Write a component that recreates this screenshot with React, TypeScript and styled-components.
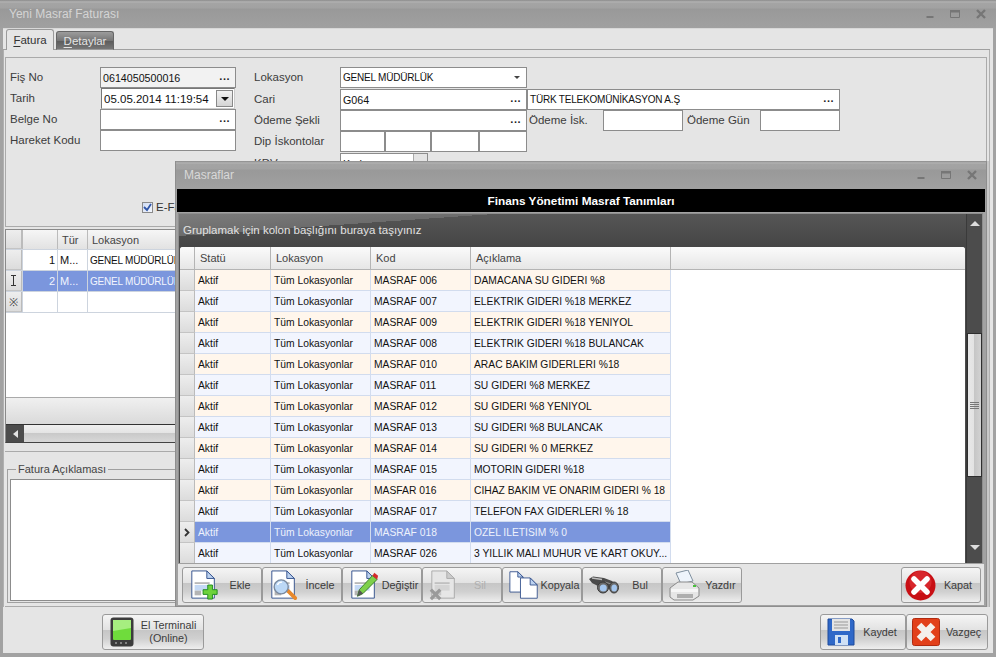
import React from 'react';
import styled, { createGlobalStyle } from 'styled-components';

const GlobalStyle = createGlobalStyle`
  html, body { margin: 0; padding: 0; background: #a0a0a0; }
  body { font-family: "Liberation Sans", Arial, sans-serif; font-size: 11px; color: #333; }
  * { box-sizing: border-box; }
`;

const MainWindow = styled.div`
  position: relative;
  width: 996px;
  height: 657px;
  overflow: hidden;
  display: flex;
  flex-direction: column;
  background: #a2a2a2;
  padding: 0 3px 4px 3px;
`;

const TitleBar = styled.div`
  flex: none;
  height: 28px;
  margin: 0 -3px;
  padding: 0 10px 0 9px;
  display: flex;
  align-items: center;
  justify-content: space-between;
  background: linear-gradient(#8a8a8a 0, #b4b4b4 2px, #a4a4a4 3px, #a2a2a2 8px, #999 9px, #a0a0a0 27px);
  color: #d4d4d4;
  font-size: 12px;
`;

const WinControls = styled.div`
  display: flex;
  align-items: center;
  gap: 16px;
  margin-top: -1px;
  svg { display: block; }
`;

const WindowButtons = () => (
  <WinControls>
    <svg width="8" height="10" viewBox="0 0 8 10"><rect x="0.5" y="7" width="7" height="2" fill="#767676" /></svg>
    <svg width="10" height="10" viewBox="0 0 10 10"><path d="M0.5 1.5h9v7h-9z" fill="none" stroke="#767676" /><rect x="0" y="1" width="10" height="2.5" fill="#767676" /></svg>
    <svg width="10" height="10" viewBox="0 0 10 10"><path d="M1 1l8 8M9 1l-8 8" stroke="#767676" strokeWidth="2.4" /></svg>
  </WinControls>
);

const Body = styled.div`
  flex: 1;
  min-height: 0;
  display: flex;
  flex-direction: column;
  background: #e5e5e5;
  border-top: 1px solid #d8d8d8;
`;

const TabStrip = styled.div`
  flex: none;
  height: 21px;
  display: flex;
  align-items: flex-end;
  gap: 2px;
  padding: 1px 0 0 3px;
  margin-right: 3px;
  border-bottom: 1px solid #a0a0a0;
`;

const Tab = styled.div<{ $active?: boolean }>`
  height: ${p => (p.$active ? 21 : 19)}px;
  width: ${p => (p.$active ? 48 : 58)}px;
  margin-bottom: -1px;
  display: flex;
  align-items: center;
  justify-content: center;
  border: 1px solid ${p => (p.$active ? '#9a9a9a' : '#666')};
  border-bottom: ${p => (p.$active ? 'none' : '1px solid #9a9a9a')};
  border-radius: 3px 3px 0 0;
  background: ${p => (p.$active ? '#e5e5e5' : 'linear-gradient(#9c9c9c, #777 50%, #5a5a5a 51%, #777)')};
  color: ${p => (p.$active ? '#333' : '#e4e4e4')};
  font-size: 11.5px;
  u { text-underline-offset: 2px; }
`;

const TabPage = styled.div`
  flex: 1;
  min-height: 0;
  display: flex;
  flex-direction: column;
  padding: 7px 2px 0 1px;
  margin-right: 3px;
  border-right: 1px solid #b0b0b0;
  border-left: 1px solid #b0b0b0;
`;

const FormPanel = styled.div`
  flex: none;
  height: 170px;
  border: 1px solid #aaa;
  padding: 9px 0 0 3px;
  display: flex;
  flex-direction: column;
`;

const FormColumns = styled.div`
  display: flex;
`;

const Column = styled.div<{ $width: number; $rows: string }>`
  width: ${p => p.$width}px;
  display: grid;
  grid-template-rows: ${p => p.$rows};
`;

const FormRow = styled.div`
  display: flex;
  align-items: stretch;
  height: 21px;
`;

const Label = styled.div<{ $width: number; $pad?: number }>`
  flex: none;
  width: ${p => p.$width}px;
  display: flex;
  align-items: center;
  padding: 0 0 2px ${p => p.$pad ?? 1}px;
  color: #3c3c3c;
  font-size: 11.5px;
  white-space: nowrap;
`;

const Field = styled.div<{ $width: number; $shaded?: boolean }>`
  flex: none;
  width: ${p => p.$width}px;
  height: 21px;
  display: flex;
  align-items: center;
  justify-content: space-between;
  padding: 0 5px 0 2px;
  background: ${p => (p.$shaded ? '#f2f2f2' : '#fff')};
  border: 1px solid #8c8c8c;
  color: #111;
  font-size: 10.7px;
  overflow: hidden;
  white-space: nowrap;
`;

const Caps = styled.span`
  font-size: 10px;
  letter-spacing: -0.2px;
`;

const Dots = styled.span`
  font-weight: 700;
  font-size: 11px;
  letter-spacing: 0.5px;
  line-height: 8px;
  margin-top: -3px;
  color: #222;
`;

const SelectArrow = styled.span`
  width: 0;
  height: 0;
  margin-right: 1px;
  border-left: 3px solid transparent;
  border-right: 3px solid transparent;
  border-top: 3px solid #444;
`;

const DateField = styled(Field)`
  padding-right: 1px;
  border-color: #777 #ccc #ccc #777;
  margin-left: 1px;
  font-size: 11.5px;
`;

const DateDrop = styled.span`
  width: 17px;
  height: 17px;
  display: flex;
  align-items: center;
  justify-content: center;
  background: linear-gradient(#f2f2f2, #d4d4d4);
  border: 1px solid #888;
  span {
    border-left: 4px solid transparent;
    border-right: 4px solid transparent;
    border-top: 4px solid #111;
  }
`;

const KdvField = styled(Field)`
  padding-right: 0;
`;

const KdvDrop = styled.span`
  align-self: stretch;
  width: 14px;
  background: #e4e4e4;
  border-left: 1px solid #aaa;
`;

const CheckRow = styled.div`
  margin-top: auto;
  margin-bottom: 13px;
  padding-left: 133px;
  display: flex;
  align-items: center;
  gap: 3px;
  font-size: 11.5px;
`;

const CheckBox = styled.span`
  width: 11px;
  height: 11px;
  display: flex;
  background: linear-gradient(135deg, #cfdcf4, #f4f7fd);
  border: 1px solid #8a8a8a;
  svg { display: block; }
`;

const Splitter = styled.div<{ $h: number }>`
  flex: none;
  height: ${p => p.$h}px;
`;

const LineGrid = styled.div`
  flex: none;
  height: 214px;
  display: flex;
  flex-direction: column;
  border: 1px solid #8a8a8a;
  border-bottom-color: #444;
  background: #fff;
`;

const LineRow = styled.div<{ $header?: boolean; $selected?: boolean }>`
  flex: none;
  display: grid;
  grid-template-columns: 16px 35px 30px 200px;
  height: ${p => (p.$header ? 20 : 21)}px;
  border-bottom: 1px solid #cdd4de;
  background: ${p => (p.$selected ? '#7b96dd' : '#fff')};
  color: ${p => (p.$selected ? '#f2f5fd' : '#111')};
`;

const LineCell = styled.div<{ $right?: boolean; $head?: boolean }>`
  display: flex;
  align-items: center;
  justify-content: ${p => (p.$right ? 'flex-end' : 'flex-start')};
  padding: 0 ${p => (p.$right ? 2 : p.$head ? 4 : 2)}px;
  white-space: nowrap;
  overflow: hidden;
  border-left: 1px solid ${p => (p.$head ? '#bbb' : '#cdd4de')};
  background: ${p => (p.$head ? 'linear-gradient(#f6f6f6, #e2e2e2)' : 'transparent')};
  color: ${p => (p.$head ? '#444' : 'inherit')};
`;

const RowHandle = styled.div`
  display: flex;
  align-items: center;
  justify-content: center;
  background: linear-gradient(#eee, #dcdcdc);
  border-right: 1px solid #bbb;
  border-bottom: 1px solid #c4c4c4;
  color: #444;
  svg { display: block; }
`;

const GridSpace = styled.div`
  flex: 1;
`;

const GridFooter = styled.div`
  flex: none;
  height: 27px;
  background: linear-gradient(#f0f0f0, #dadada);
  border-top: 1px solid #aaa;
`;

const HScroll = styled.div`
  flex: none;
  height: 18px;
  display: flex;
  border-top: 1px solid #333;
  background: linear-gradient(#f0f0f0, #e4e4e4 45%, #c8c8c8 46%, #d8d8d8);
`;

const HScrollArrow = styled.div`
  width: 18px;
  display: flex;
  align-items: center;
  justify-content: center;
  background: #4c4c4c;
  span {
    border-top: 4px solid transparent;
    border-bottom: 4px solid transparent;
    border-right: 5px solid #e4e4e4;
  }
`;

const NotesPanel = styled.div`
  flex: 1;
  min-height: 0;
  padding: 11px 0 3px 2px;
  border-top: 1px solid #aaa;
  border-bottom: 1px solid #aaa;
  display: flex;
`;

const NotesGroup = styled.fieldset`
  flex: 1;
  margin: 0;
  padding: 4px 2px 2px 2px;
  min-width: 0;
  display: flex;
  border: 1px solid #a0a0a0;
  legend {
    margin-left: 6px;
    padding: 0 2px;
    color: #444;
    font-size: 11px;
    line-height: 12px;
  }
`;

const NotesBox = styled.div`
  width: 100%;
  height: 122px;
  background: #fff;
  border: 1px solid #8c8c8c;
`;

const BottomBar = styled.div`
  flex: none;
  height: 46px;
  display: flex;
  align-items: flex-start;
  justify-content: space-between;
  padding: 7px 5px 0 99px;
`;

const ActionGroup = styled.div`
  display: flex;
`;

const ActionButton = styled.div<{ $width?: number; $disabled?: boolean; $pad?: number }>`
  flex: none;
  width: ${p => p.$width ?? 80}px;
  height: 36px;
  display: flex;
  align-items: center;
  padding-left: ${p => p.$pad ?? 6}px;
  border: 1px solid #9a9a9a;
  border-radius: 3px;
  background: linear-gradient(#f5f5f5, #e8e8e8 30%, #e2e2e2 44%, #c6c6c6 45%, #d0d0d0 70%, #eeeeee);
  color: ${p => (p.$disabled ? '#b0b0b0' : '#3c3c3c')};
  font-size: 10.8px;
  svg { flex: none; display: block; }
`;

const ButtonText = styled.span`
  flex: 1;
  text-align: center;
  line-height: 13px;
  white-space: nowrap;
`;

const Dialog = styled.div`
  position: absolute;
  left: 175px;
  top: 161px;
  width: 812px;
  height: 446px;
  display: flex;
  flex-direction: column;
  background: #a2a2a2;
  border: 1px solid #8e8e8e;
  border-top: none;
  padding: 0 1px 1px 1px;
  box-shadow: 2px 0 0 #c8c8c8;
`;

const DialogTitle = styled(TitleBar)`
  margin: 0 -1px;
  padding: 0 9px 0 8px;
  color: #d8d8d8;
`;

const BlackBar = styled.div`
  flex: none;
  height: 23px;
  display: flex;
  align-items: center;
  justify-content: center;
  background: #000;
  color: #fff;
  font-weight: 700;
  font-size: 11.8px;
  margin-bottom: 1px;
`;

const GridFrame = styled.div`
  flex: none;
  height: 350px;
  margin: 0 2px 0 1px;
  display: flex;
  background: #4c4c4c;
  border: 1px solid #8e8e8e;
  border-bottom: none;
`;

const GridMain = styled.div`
  flex: 1;
  min-width: 0;
  display: flex;
  flex-direction: column;
`;

const GroupPanel = styled.div`
  flex: none;
  height: 33px;
  padding: 0 0 2px 4px;
  display: flex;
  align-items: center;
  color: #e2e2e2;
  font-size: 11.5px;
  background:
    linear-gradient(176deg, #7c7c7c 0, #6c6c6c 25%, transparent 25%),
    linear-gradient(#565656, #454545);
`;

const TableArea = styled.div`
  flex: 1;
  min-height: 0;
  margin: 0 1px;
  background: #fff;
  border-radius: 3px 3px 0 0;
  overflow: hidden;
`;

const HeaderRow = styled.div`
  display: grid;
  grid-template-columns: 15px 76px 100px 100px 200px 1fr;
  height: 23px;
  background: linear-gradient(#fbfbfb, #e6e6e6);
  border-bottom: 1px solid #b4b4b4;
`;

const HeaderCell = styled.div`
  display: flex;
  align-items: center;
  padding-left: 5px;
  color: #444;
  font-size: 11px;
  border-right: 1px solid #b4b4b4;
  &:last-child { border-right: none; }
`;

const DataRow = styled.div<{ $selected?: boolean }>`
  display: grid;
  grid-template-columns: 15px 76px 100px 100px 200px;
  height: 21px;
  color: ${p => (p.$selected ? '#eef2fc' : '#111')};
`;

const DataCell = styled.div<{ $odd: boolean; $selected?: boolean }>`
  display: flex;
  align-items: center;
  padding-left: 3px;
  font-size: 10.3px;
  white-space: nowrap;
  overflow: hidden;
  background: ${p => (p.$selected ? '#7b96dd' : p.$odd ? '#fff6ec' : '#f2f5fe')};
  border-right: 1px solid #d2dcee;
  border-bottom: 1px solid #d2dcee;
`;

const VScroll = styled.div`
  flex: none;
  width: 16px;
  display: flex;
  flex-direction: column;
  align-items: center;
  background: #4c4c4c;
  border-left: 1px solid #3a3a3a;
`;

const VArrow = styled.div<{ $down?: boolean }>`
  flex: none;
  height: 18px;
  width: 100%;
  display: flex;
  align-items: ${p => (p.$down ? 'flex-start' : 'center')};
  justify-content: center;
  span {
    border-left: 5px solid transparent;
    border-right: 5px solid transparent;
    border-${p => (p.$down ? 'top' : 'bottom')}: 5px solid #dcdcdc;
  }
`;

const VGap = styled.div<{ $h?: number }>`
  ${p => (p.$h ? `height: ${p.$h}px; flex: none;` : 'flex: 1;')}
`;

const VThumb = styled.div`
  flex: none;
  width: 100%;
  height: 144px;
  display: flex;
  flex-direction: column;
  align-items: center;
  justify-content: center;
  gap: 1px;
  border: 1px solid #2e2e2e;
  background: linear-gradient(90deg, #e8e8e8, #e2e2e2 48%, #c6c6c6 50%, #d2d2d2 100%);
  i { display: block; width: 9px; height: 1px; background: #777; }
`;

const Toolbar = styled.div`
  flex: 1;
  min-height: 0;
  margin: 0 1px;
  padding: 3px 3px 0 4px;
  display: flex;
  justify-content: space-between;
  background: #e5e5e5;
  border-top: 1px solid #a0a0a0;
`;

const DocShape = ({ faded }: { faded?: boolean }) => (
  <>
    <path d="M3 1H19L27 9V30H3Z" fill={faded ? '#e6e6e6' : '#fff'} stroke={faded ? '#aaa' : '#32508c'} />
    <path d="M19 1V9H27Z" fill={faded ? '#ccc' : '#bcd2f0'} stroke={faded ? '#aaa' : '#32508c'} />
    <rect x="6" y="13" width="16" height="2" fill={faded ? '#c0c0c0' : '#b8b8b8'} />
    <rect x="6" y="16" width="16" height="6" fill={faded ? '#d4d4d4' : '#c4d9f5'} />
    <rect x="6" y="22" width="7" height="5" fill={faded ? '#c8c8c8' : '#b4b4b4'} />
  </>
);

const AddIcon = () => (
  <svg width="30" height="32" viewBox="0 0 32 32">
    <DocShape />
    <path d="M20 16h5v5h5v5h-5v5h-5v-5h-5v-5h5z" fill="#6ed23c" stroke="#1f8a1f" />
  </svg>
);

const ViewIcon = () => (
  <svg width="30" height="32" viewBox="0 0 32 32">
    <DocShape />
    <path d="M20 22l8 8" stroke="#e8892c" strokeWidth="4" strokeLinecap="round" />
    <circle cx="13" cy="18" r="7.5" fill="#bcd8f6" stroke="#7a8aa0" strokeWidth="1.5" />
    <path d="M9 16a5 5 0 0 1 5-3" stroke="#fff" strokeWidth="1.5" fill="none" />
  </svg>
);

const EditIcon = () => (
  <svg width="30" height="32" viewBox="0 0 32 32">
    <DocShape />
    <path d="M9 28l2-7L25 6l5 4L15 25z" fill="#7ed04a" stroke="#3a7a2a" />
    <path d="M25 6l2-3 4 3-1 4z" fill="#d42a2a" />
    <path d="M9 28l2-7 4 4z" fill="#555" />
  </svg>
);

const DeleteIcon = () => (
  <svg width="30" height="32" viewBox="0 0 32 32">
    <DocShape faded />
    <path d="M2 21l10 10M12 21L2 31" stroke="#9a9a9a" strokeWidth="3.5" />
  </svg>
);

const CopyIcon = () => (
  <svg width="30" height="32" viewBox="0 0 34 32">
    <path d="M1 1H10L16 7V24H1Z" fill="#fff" stroke="#32508c" />
    <path d="M10 1V7H16Z" fill="#bcd2f0" stroke="#32508c" />
    <path d="M13 8H24L32 16V31H13Z" fill="#fff" stroke="#32508c" />
    <path d="M24 8V16H32Z" fill="#bcd2f0" stroke="#32508c" />
  </svg>
);

const FindIcon = () => (
  <svg width="30" height="18" viewBox="0 0 30 18">
    <path d="M0 3L4 0.5 15 2l8 3 4 4-6 3-6 2-6-4L3 7z" fill="#4a4a4a" />
    <path d="M3 2l10 1.5" stroke="#bdbdbd" strokeWidth="1.3" />
    <path d="M16 6l6 2" stroke="#8c8c8c" strokeWidth="1.2" />
    <ellipse cx="14" cy="11.5" rx="5.5" ry="5.5" fill="#6a6a6a" stroke="#3a3a3a" />
    <ellipse cx="14.3" cy="12" rx="3.5" ry="3.6" fill="#a4c6ee" />
    <ellipse cx="25" cy="11.5" rx="4.5" ry="5.5" fill="#6a6a6a" stroke="#3a3a3a" />
    <ellipse cx="25.2" cy="12" rx="2.8" ry="3.6" fill="#a4c6ee" />
  </svg>
);

const PrintIcon = () => (
  <svg width="31" height="31" viewBox="0 0 31 31">
    <path d="M7 3l12-3 5 11-12 3z" fill="#eef4fb" stroke="#7f8f9e" />
    <path d="M1 18l8-6h14l7 6v8l-6 4H5l-4-3z" fill="#e6e6e6" stroke="#8a8a8a" />
    <path d="M2 19h27v3H2z" fill="#f6f6f6" />
    <path d="M8 25h16M8 27h16" stroke="#777" />
    <rect x="24" y="15" width="3" height="2" fill="#49c03c" />
  </svg>
);

const CloseIcon = () => (
  <svg width="31" height="31" viewBox="0 0 31 31">
    <circle cx="15.5" cy="15.5" r="15" fill="#c80f14" />
    <circle cx="15.5" cy="12" r="11" fill="#e43a3e" opacity="0.55" />
    <path d="M9 9l13 13M22 9L9 22" stroke="#fff" strokeWidth="5.5" strokeLinecap="round" />
  </svg>
);

const SaveIcon = () => (
  <svg width="28" height="28" viewBox="0 0 28 28">
    <path d="M1 1h24l2 2v24H1z" fill="#2f68c8" stroke="#1e4a9a" />
    <rect x="5" y="1" width="18" height="12" fill="#e4e4e4" />
    <path d="M7 4h14M7 7h14M7 10h14" stroke="#999" />
    <rect x="8" y="17" width="13" height="10" fill="#cfe0f5" />
    <rect x="11" y="19" width="3" height="6" fill="#2f68c8" />
  </svg>
);

const CancelIcon = () => (
  <svg width="28" height="28" viewBox="0 0 28 28">
    <rect x="0.5" y="0.5" width="27" height="27" rx="2" fill="#e2401a" stroke="#b02a10" />
    <path d="M7 7l14 14M21 7L7 21" stroke="#f4f0ec" strokeWidth="6.5" />
  </svg>
);

const TerminalIcon = () => (
  <svg width="24" height="30" viewBox="0 0 24 30">
    <rect x="0.5" y="0.5" width="23" height="29" rx="3" fill="#3c3c3c" />
    <rect x="3" y="3" width="18" height="20" rx="1" fill="#6fdc3c" />
    <path d="M3 3h18v8L3 14z" fill="#a6ee80" />
    <path d="M5 26h2M10 26h2M15 26h2" stroke="#999" strokeWidth="1.5" />
  </svg>
);

const BeamIcon = () => (
  <svg width="7" height="11" viewBox="0 0 7 11">
    <path d="M1 0.5h5M1 10.5h5M3.5 1v9" stroke="#333" fill="none" />
  </svg>
);

const ChevronIcon = () => (
  <svg width="6" height="9" viewBox="0 0 6 9">
    <path d="M1 1l3.5 3.5L1 8" stroke="#333" strokeWidth="1.8" fill="none" />
  </svg>
);

const rows: [string, string][] = [
  ['MASRAF 006', 'DAMACANA SU GIDERI %8'],
  ['MASRAF 007', 'ELEKTRIK GIDERI %18 MERKEZ'],
  ['MASRAF 009', 'ELEKTRIK GIDERI %18 YENIYOL'],
  ['MASRAF 008', 'ELEKTRIK GIDERI %18 BULANCAK'],
  ['MASRAF 010', 'ARAC BAKIM GIDERLERI %18'],
  ['MASRAF 011', 'SU GIDERI %8 MERKEZ'],
  ['MASRAF 012', 'SU GIDERI %8 YENIYOL'],
  ['MASRAF 013', 'SU GIDERI %8 BULANCAK'],
  ['MASRAF 014', 'SU GIDERI % 0 MERKEZ'],
  ['MASRAF 015', 'MOTORIN GIDERI %18'],
  ['MASFAR 016', 'CIHAZ BAKIM VE ONARIM GIDERI % 18'],
  ['MASRAF 017', 'TELEFON FAX GIDERLERI % 18'],
  ['MASRAF 018', 'OZEL ILETISIM % 0'],
  ['MASRAF 026', '3 YILLIK MALI MUHUR VE KART OKUY...'],
];

const tools = [
  { label: 'Ekle', icon: <AddIcon /> },
  { label: 'İncele', icon: <ViewIcon /> },
  { label: 'Değiştir', icon: <EditIcon /> },
  { label: 'Sil', icon: <DeleteIcon />, disabled: true },
  { label: 'Kopyala', icon: <CopyIcon /> },
  { label: 'Bul', icon: <FindIcon /> },
  { label: 'Yazdır', icon: <PrintIcon /> },
];

export default function App() {
  return (
    <MainWindow>
      <GlobalStyle />
      <TitleBar>
        <span>Yeni Masraf Faturası</span>
        <WindowButtons />
      </TitleBar>
      <Body>
        <TabStrip>
          <Tab $active><span><u>F</u>atura</span></Tab>
          <Tab><span><u>D</u>etaylar</span></Tab>
        </TabStrip>
        <TabPage>
          <FormPanel>
            <FormColumns>
              <Column $width={245} $rows="21px 21px 21px 21px">
                <FormRow><Label $width={91}>Fiş No</Label><Field $width={136} $shaded>0614050500016<Dots>...</Dots></Field></FormRow>
                <FormRow><Label $width={91}>Tarih</Label><DateField $width={134}>05.05.2014 11:19:54<DateDrop><span /></DateDrop></DateField></FormRow>
                <FormRow><Label $width={91}>Belge No</Label><Field $width={136}><span /><Dots>...</Dots></Field></FormRow>
                <FormRow><Label $width={91}>Hareket Kodu</Label><Field $width={136} /></FormRow>
              </Column>
              <Column $width={600} $rows="22px 21px 21px 22px 21px">
                <FormRow><Label $width={86} $pad={0}>Lokasyon</Label><Field $width={187}><Caps>GENEL MÜDÜRLÜK</Caps><SelectArrow /></Field></FormRow>
                <FormRow><Label $width={86} $pad={0}>Cari</Label><Field $width={187}>G064<Dots>...</Dots></Field><Field $width={313}><Caps>TÜRK TELEKOMÜNİKASYON A.Ş</Caps><Dots>...</Dots></Field></FormRow>
                <FormRow>
                  <Label $width={86} $pad={0}>Ödeme Şekli</Label>
                  <Field $width={187}><span /><Dots>...</Dots></Field>
                  <Label $width={76} $pad={2}>Ödeme İsk.</Label>
                  <Field $width={80} />
                  <Label $width={77} $pad={4}>Ödeme Gün</Label>
                  <Field $width={80} />
                </FormRow>
                <FormRow>
                  <Label $width={86} $pad={0}>Dip İskontolar</Label>
                  <Field $width={45} /><Field $width={46} /><Field $width={48} /><Field $width={48} />
                </FormRow>
                <FormRow><Label $width={86} $pad={0}>KDV</Label><KdvField $width={88}>Kodu<KdvDrop /></KdvField></FormRow>
              </Column>
            </FormColumns>
            <CheckRow>
              <CheckBox>
                <svg width="9" height="9" viewBox="0 0 9 9"><path d="M1 4l3 3 4-6" stroke="#2f55a8" strokeWidth="1.8" fill="none" /></svg>
              </CheckBox>
              E-Fatura
            </CheckRow>
          </FormPanel>
          <Splitter $h={2} />
          <LineGrid>
            <LineRow $header>
              <RowHandle />
              <LineCell $head />
              <LineCell $head>Tür</LineCell>
              <LineCell $head>Lokasyon</LineCell>
            </LineRow>
            <LineRow>
              <RowHandle />
              <LineCell $right>1</LineCell>
              <LineCell>M...</LineCell>
              <LineCell><Caps>GENEL MÜDÜRLÜK</Caps></LineCell>
            </LineRow>
            <LineRow $selected>
              <RowHandle><BeamIcon /></RowHandle>
              <LineCell $right>2</LineCell>
              <LineCell>M...</LineCell>
              <LineCell><Caps>GENEL MÜDÜRLÜK</Caps></LineCell>
            </LineRow>
            <LineRow>
              <RowHandle>※</RowHandle>
              <LineCell />
              <LineCell />
              <LineCell />
            </LineRow>
            <GridSpace />
            <GridFooter />
            <HScroll><HScrollArrow><span /></HScrollArrow></HScroll>
          </LineGrid>
          <Splitter $h={8} />
          <NotesPanel>
            <NotesGroup>
              <legend>Fatura Açıklaması</legend>
              <NotesBox />
            </NotesGroup>
          </NotesPanel>
        </TabPage>
        <BottomBar>
          <ActionButton $width={102} $pad={7}>
            <TerminalIcon />
            <ButtonText>El Terminali<br />(Online)</ButtonText>
          </ActionButton>
          <ActionGroup>
            <ActionButton $width={86}><SaveIcon /><ButtonText>Kaydet</ButtonText></ActionButton>
            <ActionButton $width={82} $pad={5}><CancelIcon /><ButtonText>Vazgeç</ButtonText></ActionButton>
          </ActionGroup>
        </BottomBar>
      </Body>

      <Dialog>
        <DialogTitle>
          <span>Masraflar</span>
          <WindowButtons />
        </DialogTitle>
        <BlackBar>Finans Yönetimi Masraf Tanımları</BlackBar>
        <GridFrame>
          <GridMain>
            <GroupPanel>Gruplamak için kolon başlığını buraya taşıyınız</GroupPanel>
            <TableArea>
              <HeaderRow>
                <HeaderCell />
                <HeaderCell>Statü</HeaderCell>
                <HeaderCell>Lokasyon</HeaderCell>
                <HeaderCell>Kod</HeaderCell>
                <HeaderCell>Açıklama</HeaderCell>
                <HeaderCell />
              </HeaderRow>
              {rows.map(([code, text], i) => {
                const odd = i % 2 === 0;
                const selected = code === 'MASRAF 018';
                return (
                  <DataRow key={code} $selected={selected}>
                    <RowHandle>{selected ? <ChevronIcon /> : null}</RowHandle>
                    <DataCell $odd={odd} $selected={selected}>Aktif</DataCell>
                    <DataCell $odd={odd} $selected={selected}>Tüm Lokasyonlar</DataCell>
                    <DataCell $odd={odd} $selected={selected}>{code}</DataCell>
                    <DataCell $odd={odd} $selected={selected}>{text}</DataCell>
                  </DataRow>
                );
              })}
            </TableArea>
          </GridMain>
          <VScroll>
            <VArrow><span /></VArrow>
            <VGap $h={101} />
            <VThumb><i /><i /><i /><i /></VThumb>
            <VGap />
            <VArrow $down><span /></VArrow>
          </VScroll>
        </GridFrame>
        <Toolbar>
          <ActionGroup>
            {tools.map(t => (
              <ActionButton key={t.label} $disabled={t.disabled}>
                {t.icon}
                <ButtonText>{t.label}</ButtonText>
              </ActionButton>
            ))}
          </ActionGroup>
          <ActionButton $pad={3}><CloseIcon /><ButtonText>Kapat</ButtonText></ActionButton>
        </Toolbar>
      </Dialog>
    </MainWindow>
  );
}
